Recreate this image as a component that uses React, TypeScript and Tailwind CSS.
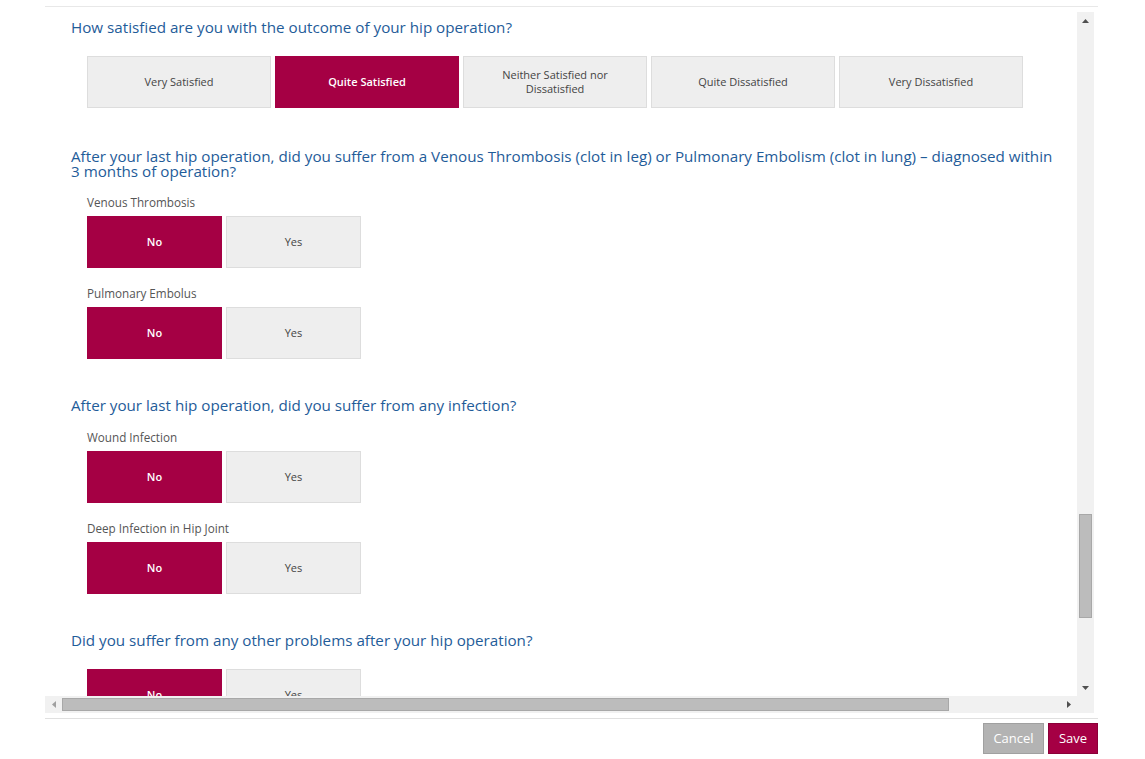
import React from 'react';

const font = { fontFamily: '"Open Sans", "Noto Sans", sans-serif' };

type Opt = { label: React.ReactNode; selected?: boolean };

const Choice = ({ opt, wide }: { opt: Opt; wide?: boolean }) => (
  <div
    className={
      (wide ? 'w-[184px] ' : 'w-[135px] ') +
      'h-[52px] flex items-center justify-center text-center text-[11px] leading-[14px] border ' +
      (opt.selected
        ? 'bg-[#a50044] border-[#a50044] text-white font-semibold'
        : 'bg-[#eeeeee] border-[#dddddd] text-[#444444]')
    }
  >
    {opt.label}
  </div>
);

const YesNo = () => (
  <div className="flex gap-[4px]">
    <Choice opt={{ label: 'No', selected: true }} />
    <Choice opt={{ label: 'Yes' }} />
  </div>
);

const Question = ({ children }: { children: React.ReactNode }) => (
  <h3 className="text-[15.2px] leading-[15px] text-[#1f5c99] pl-[26px] pr-[20px]">{children}</h3>
);

const SubLabel = ({ children }: { children: React.ReactNode }) => (
  <div className="text-[11.7px] leading-[16px] text-[#555555] mb-[6px]">{children}</div>
);

export default function App() {
  const satisfaction: Opt[] = [
    { label: 'Very Satisfied' },
    { label: 'Quite Satisfied', selected: true },
    { label: <>Neither Satisfied nor<br />Dissatisfied</> },
    { label: 'Quite Dissatisfied' },
    { label: 'Very Dissatisfied' },
  ];

  return (
    <div className="w-[1145px] h-[759px] bg-white overflow-hidden" style={font}>
      <div className="ml-[45px] w-[1053px] pt-[6px]">
        <div className="border-t border-[#e8e8e8] pt-[5px] pr-[4px]">
          <div className="flex h-[684px]">
            {/* content */}
            <div className="flex-1 overflow-hidden">
              <div className="pt-[8px]">
                <Question>How satisfied are you with the outcome of your hip operation?</Question>
                <div className="flex gap-[4px] pl-[42px] mt-[21px]">
                  {satisfaction.map((o, i) => (
                    <Choice key={i} opt={o} wide />
                  ))}
                </div>

                <div className="mt-[41px]">
                  <Question>
                    After your last hip operation, did you suffer from a Venous Thrombosis (clot in leg) or Pulmonary Embolism (clot in lung) – diagnosed within 3 months of operation?
                  </Question>
                </div>
                <div className="pl-[42px] mt-[15px]">
                  <SubLabel>Venous Thrombosis</SubLabel>
                  <YesNo />
                  <div className="mt-[17px]">
                    <SubLabel>Pulmonary Embolus</SubLabel>
                    <YesNo />
                  </div>
                </div>

                <div className="mt-[39px]">
                  <Question>After your last hip operation, did you suffer from any infection?</Question>
                </div>
                <div className="pl-[42px] mt-[16px]">
                  <SubLabel>Wound Infection</SubLabel>
                  <YesNo />
                  <div className="mt-[17px]">
                    <SubLabel>Deep Infection in Hip Joint</SubLabel>
                    <YesNo />
                  </div>
                </div>

                <div className="mt-[39px]">
                  <Question>Did you suffer from any other problems after your hip operation?</Question>
                </div>
                <div className="pl-[42px] mt-[21px]">
                  <YesNo />
                </div>
              </div>
            </div>
            {/* vertical scrollbar */}
            <div className="w-[17px] bg-[#f1f1f1] flex flex-col items-center">
              <div className="h-[17px] flex items-center justify-center">
                <svg width="7" height="4" viewBox="0 0 7 4"><path d="M3.5 0L7 4H0z" fill="#505050" /></svg>
              </div>
              <div className="flex-1 w-full px-[2px] flex flex-col">
                <div className="h-[485px]" />
                <div className="h-[104px] bg-[#bcbcbc] border border-[#a8a8a8]" />
                <div className="flex-1" />
              </div>
              <div className="h-[17px] flex items-center justify-center">
                <svg width="7" height="4" viewBox="0 0 7 4"><path d="M0 0H7L3.5 4z" fill="#505050" /></svg>
              </div>
            </div>
          </div>
          {/* horizontal scrollbar */}
          <div className="flex h-[17px]">
            <div className="flex-1 bg-[#f1f1f1] flex items-center">
              <div className="w-[17px] flex items-center justify-center">
                <svg width="4" height="7" viewBox="0 0 4 7"><path d="M4 0V7L0 3.5z" fill="#a0a0a0" /></svg>
              </div>
              <div className="w-[887px] h-[13px] bg-[#bcbcbc] border border-[#a8a8a8]" />
              <div className="flex-1" />
              <div className="w-[17px] flex items-center justify-center">
                <svg width="4" height="7" viewBox="0 0 4 7"><path d="M0 0L4 3.5 0 7z" fill="#505050" /></svg>
              </div>
            </div>
            <div className="w-[17px] bg-[#f1f1f1]" />
          </div>
        </div>
        <div className="border-t border-[#e0e0e0] mt-[5px] pt-[4px] flex justify-end gap-[4px]">
          <button className="w-[61px] h-[31px] bg-[#b3b3b3] border border-[#a0a0a0] text-white text-[13px]">Cancel</button>
          <button className="w-[50px] h-[31px] bg-[#a50044] border border-[#8a0038] text-white text-[13px]">Save</button>
        </div>
      </div>
    </div>
  );
}
